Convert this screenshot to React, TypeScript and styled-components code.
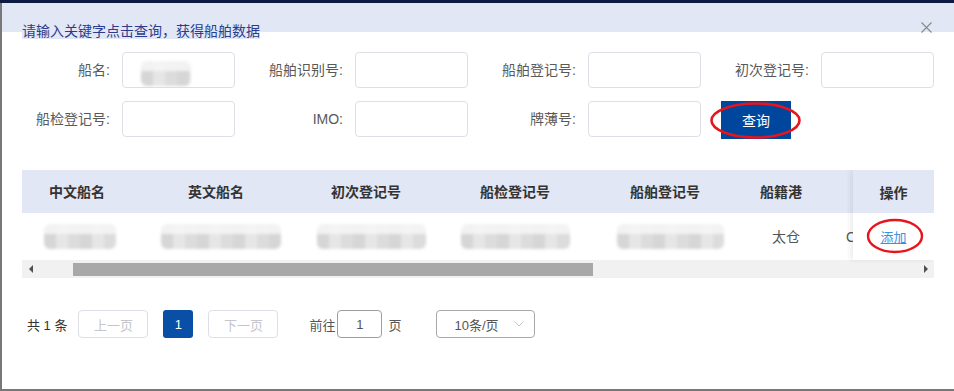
import React from 'react';
import styled, { createGlobalStyle } from 'styled-components';

const Global = createGlobalStyle`
  html, body { margin: 0; padding: 0; }
  body {
    width: 954px;
    height: 391px;
    overflow: hidden;
    background: linear-gradient(#0e1b40 0 3px, #787878 3px);
    font-family: "Liberation Sans", "Noto Sans CJK SC", sans-serif;
  }
  * { box-sizing: border-box; }
`;

const Modal = styled.div`
  position: relative;
  margin: 3px 0 0 2px;
  width: 952px;
  height: 386px;
  background: #fff;
  display: flex;
  flex-direction: column;
`;

const Header = styled.div`
  height: 35px;
  padding: 19px 0 0 20px;
  background: linear-gradient(#e1e7f5 0 29px, #fff 29px);
`;

const Title = styled.span`
  display: inline-block;
  height: 16px;
  line-height: 16px;
  font-size: 14px;
  color: #2c3c8c;
  background: #e1e7f5;
`;

const Close = styled.button`
  position: absolute;
  top: 19px;
  right: 22px;
  width: 11px;
  height: 11px;
  padding: 0;
  border: 0;
  background: transparent;
  display: flex;
`;

const Form = styled.div`
  margin-top: 14px;
  display: grid;
  grid-template-columns: repeat(4, 233px);
  row-gap: 13px;
  align-items: start;
`;

const Field = styled.div`
  display: flex;
  align-items: center;
  height: 36px;
`;

const Label = styled.label`
  width: 120px;
  padding-right: 12px;
  text-align: right;
  font-size: 14px;
  line-height: 16px;
  color: #595959;
  white-space: nowrap;
`;

const InputBox = styled.div`
  position: relative;
  width: 113px;
  height: 36px;
  border: 1px solid #dcdfe6;
  border-radius: 4px;
  background: #fff;
`;

const Input = styled.input`
  width: 100%;
  height: 100%;
  border: 0;
  background: transparent;
  outline: none;
  padding: 0 10px;
  font: inherit;
`;

const Blur = styled.div<{ $w: number }>`
  width: ${p => p.$w}px;
  height: 25px;
  background:
    linear-gradient(to bottom, rgba(245,245,245,0.9) 0 42%, transparent 42%),
    repeating-linear-gradient(90deg, #d6d6d6 0 12px, #e6e6e6 12px 24px, #dcdcdc 24px 36px);
  filter: blur(1.6px);
  border-radius: 6px;
`;

const InputBlur = styled(Blur)`
  position: absolute;
  left: 18px;
  top: 8px;
  pointer-events: none;
`;

const QueryWrap = styled.div`
  position: relative;
  margin-left: 20px;
  width: 70px;
  height: 38px;
`;

const QueryButton = styled.button`
  width: 70px;
  height: 38px;
  border: 0;
  padding: 0;
  background: #00469c;
  color: #fff;
  font-size: 14px;
  font-family: inherit;
`;

const Ellipse = styled.svg<{ $l: number; $t: number }>`
  position: absolute;
  left: ${p => p.$l}px;
  top: ${p => p.$t}px;
  pointer-events: none;
  overflow: visible;
`;

const TableWrap = styled.div`
  position: relative;
  margin: 31px 20px 0;
  width: 912px;
  overflow: hidden;
`;

const TRow = styled.div<{ $head?: boolean }>`
  display: flex;
  height: ${p => (p.$head ? 43 : 47)}px;
  width: 1100px;
  background: ${p => (p.$head ? '#e1e7f5' : '#fff')};
`;

const Cell = styled.div<{ $w: number; $head?: boolean; $left?: boolean; $shift?: number }>`
  flex: 0 0 ${p => p.$w}px;
  display: flex;
  align-items: center;
  justify-content: ${p => (p.$left ? 'flex-start' : 'center')};
  padding-left: ${p => (p.$left ? 16 : p.$shift ?? 0)}px;
  font-size: 14px;
  line-height: 16px;
  font-weight: ${p => (p.$head ? 700 : 400)};
  color: ${p => (p.$head ? '#333' : '#555')};
  white-space: nowrap;
`;

const FixedCol = styled.div`
  position: absolute;
  top: 0;
  right: 0;
  width: 81px;
  display: flex;
  flex-direction: column;
  box-shadow: -3px 0 5px rgba(0, 0, 0, 0.07);
`;

const FixedCell = styled.div<{ $head?: boolean }>`
  position: relative;
  height: ${p => (p.$head ? 43 : 47)}px;
  display: flex;
  align-items: center;
  justify-content: center;
  background: ${p => (p.$head ? '#e1e7f5' : '#fff')};
  font-size: 14px;
  font-weight: ${p => (p.$head ? 700 : 400)};
  color: #333;
`;

const Link = styled.a`
  font-size: 13px;
  color: #3d8fe0;
  text-decoration: underline;
  cursor: pointer;
`;

const ScrollBar = styled.div`
  display: flex;
  align-items: center;
  height: 18px;
  background: #f1f1f1;
`;

const Arrow = styled.div<{ $dir: 'left' | 'right' }>`
  flex: 0 0 17px;
  height: 18px;
  display: flex;
  align-items: center;
  justify-content: center;
  &::before {
    content: '';
    border-top: 4px solid transparent;
    border-bottom: 4px solid transparent;
    ${p => (p.$dir === 'left' ? 'border-right: 4px solid #505050;' : 'border-left: 4px solid #505050;')}
  }
`;

const Track = styled.div`
  flex: 1;
  height: 18px;
  padding: 3px 0 2px 34px;
`;

const Thumb = styled.div`
  width: 520px;
  height: 13px;
  background: #a8a8a8;
`;

const Pager = styled.div`
  margin-top: 32px;
  padding-left: 25px;
  display: flex;
  align-items: center;
  height: 28px;
  font-size: 13px;
`;

const Total = styled.span`
  color: #333;
  margin-right: 11px;
`;

const PageBtn = styled.button<{ $gap: number }>`
  width: 70px;
  height: 28px;
  margin-right: ${p => p.$gap}px;
  border: 1px solid #dcdfe6;
  border-radius: 4px;
  background: #fff;
  color: #c4c6cc;
  font-size: 13px;
  font-family: inherit;
  padding: 0;
`;

const ActivePage = styled.button`
  width: 30px;
  height: 28px;
  margin-right: 15px;
  border: 0;
  border-radius: 3px;
  background: #0a4fa6;
  color: #fff;
  font-size: 13px;
  font-family: inherit;
  padding: 0;
`;

const Text = styled.span<{ $ml?: number }>`
  color: #555;
  margin-left: ${p => p.$ml ?? 0}px;
`;

const GotoInput = styled.div`
  width: 45px;
  height: 28px;
  margin-left: 2px;
  border: 1px solid #9e9e9e;
  border-radius: 4px;
  display: flex;
  align-items: center;
  justify-content: center;
  color: #555;
`;

const Select = styled.div`
  width: 99px;
  height: 28px;
  margin-left: 34px;
  border: 1px solid #a8a8a8;
  border-radius: 4px;
  display: flex;
  align-items: center;
  padding: 0 10px 0 18px;
  color: #555;
  justify-content: space-between;
`;

const columns = [
  { title: '中文船名', width: 110, blur: 72, shift: 6 },
  { title: '英文船名', width: 168, blur: 120, shift: 10 },
  { title: '初次登记号', width: 132, blur: 109, shift: 10 },
  { title: '船检登记号', width: 166, blur: 109, shift: 0 },
  { title: '船舶登记号', width: 134, blur: 107, shift: 10 },
  { title: '船籍港', width: 98, text: '太仓', shift: 10 },
];

const fields: { label: string; blur?: boolean }[] = [
  { label: '船名:', blur: true },
  { label: '船舶识别号:' },
  { label: '船舶登记号:' },
  { label: '初次登记号:' },
  { label: '船检登记号:' },
  { label: 'IMO:' },
  { label: '牌薄号:' },
];

export default function App() {
  return (
    <>
      <Global />
      <Modal>
        <Header>
          <Title>请输入关键字点击查询，获得船舶数据</Title>
        </Header>
        <Close aria-label="close">
          <svg width="11" height="11" viewBox="0 0 11 11">
            <path d="M0.5 0.5 L10.5 10.5 M10.5 0.5 L0.5 10.5" stroke="#8a8a8a" strokeWidth="1.2" />
          </svg>
        </Close>
        <Form>
          {fields.map(f => (
            <Field key={f.label}>
              <Label>{f.label}</Label>
              <InputBox>
                <Input />
                {f.blur && <InputBlur $w={50} />}
              </InputBox>
            </Field>
          ))}
          <QueryWrap>
            <QueryButton>查询</QueryButton>
            <Ellipse $l={-12} $t={0} width="93" height="39" viewBox="0 0 93 39">
              <ellipse cx="46.5" cy="19.5" rx="44" ry="17" fill="none" stroke="#e8141c" strokeWidth="2.6" />
            </Ellipse>
          </QueryWrap>
        </Form>
        <TableWrap>
          <TRow $head>
            {columns.map(c => (
              <Cell key={c.title} $w={c.width} $head>
                {c.title}
              </Cell>
            ))}
            <Cell $w={200} $head $left />
          </TRow>
          <TRow>
            {columns.map(c => (
              <Cell key={c.title} $w={c.width} $shift={c.shift}>
                {c.blur ? <Blur $w={c.blur} /> : c.text}
              </Cell>
            ))}
            <Cell $w={200} $left>
              CN
            </Cell>
          </TRow>
          <ScrollBar>
            <Arrow $dir="left" />
            <Track>
              <Thumb />
            </Track>
            <Arrow $dir="right" />
          </ScrollBar>
          <FixedCol>
            <FixedCell $head>操作</FixedCell>
            <FixedCell>
              <Link>添加</Link>
              <Ellipse $l={13} $t={5} width="58" height="36" viewBox="0 0 58 36">
                <ellipse cx="29" cy="18" rx="27" ry="16" fill="none" stroke="#e8141c" strokeWidth="2.4" />
              </Ellipse>
            </FixedCell>
          </FixedCol>
        </TableWrap>
        <Pager>
          <Total>共 1 条</Total>
          <PageBtn $gap={15}>上一页</PageBtn>
          <ActivePage>1</ActivePage>
          <PageBtn $gap={31}>下一页</PageBtn>
          <Text>前往</Text>
          <GotoInput>1</GotoInput>
          <Text $ml={6}>页</Text>
          <Select>
            <span>10条/页</span>
            <svg width="10" height="6" viewBox="0 0 10 6">
              <path d="M0.5 0.5 L5 5 L9.5 0.5" fill="none" stroke="#c0c4cc" strokeWidth="1" />
            </svg>
          </Select>
        </Pager>
      </Modal>
    </>
  );
}
